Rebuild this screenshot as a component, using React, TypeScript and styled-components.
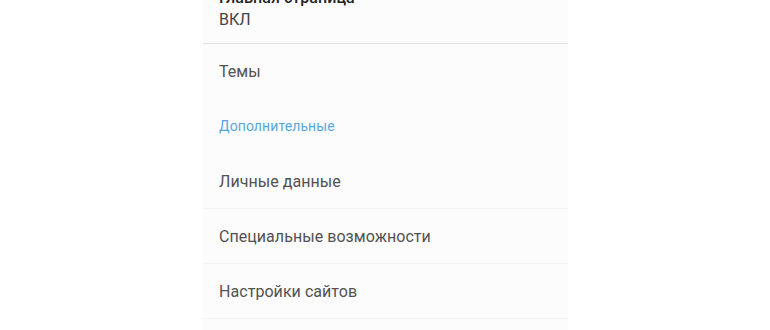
import React from 'react';
import styled, { createGlobalStyle } from 'styled-components';

const GlobalStyle = createGlobalStyle`
    html, body {
        margin: 0;
        padding: 0;
        background: #ffffff;
        font-family: Roboto, 'Noto Sans', sans-serif;
        overflow: hidden;
    }
`;

const Page = styled('div')`
    width: 770px;
    height: 330px;
    overflow: hidden;
    display: flex;
    justify-content: center;
`;

const List = styled('div')`
    width: 365px;
    margin-top: -27px;
    margin-left: 1px;
    background: #fcfcfc;
    display: flex;
    flex-direction: column;
`;

const Item = styled('div')<{ tall?: boolean; divider?: 'strong' | 'faint' | 'none' }>`
    height: ${({ tall }) => (tall ? '71px' : '55px')};
    padding: 0 16px;
    display: flex;
    flex-direction: column;
    justify-content: center;
    box-sizing: border-box;
    border-bottom: 1px solid
        ${({ divider }) => (divider === 'strong' ? '#e3e3e3' : divider === 'faint' ? '#f3f3f3' : 'transparent')};
`;

const Title = styled('span')<{ bold?: boolean }>`
    font-size: 16px;
    color: ${({ bold }) => (bold ? '#222222' : '#525252')};
    font-weight: ${({ bold }) => (bold ? 500 : 400)};
    line-height: 21px;
    letter-spacing: 0.05px;
    padding-top: 1px;
`;

const Subtitle = styled('span')`
    font-size: 16px;
    color: #444444;
    line-height: 21px;
    letter-spacing: 0.05px;
    padding-top: 1px;
`;

const Section = styled('span')`
    font-size: 14px;
    color: #5aa6dc;
    font-weight: 400;
    letter-spacing: 0.1px;
`;

export default function App() {
    return (
        <Page>
            <GlobalStyle />
            <List>
                <Item tall divider="strong">
                    <Title bold>Главная страница</Title>
                    <Subtitle>ВКЛ</Subtitle>
                </Item>
                <Item divider="none">
                    <Title>Темы</Title>
                </Item>
                <Item divider="none">
                    <Section>Дополнительные</Section>
                </Item>
                <Item divider="faint">
                    <Title>Личные данные</Title>
                </Item>
                <Item divider="faint">
                    <Title>Специальные возможности</Title>
                </Item>
                <Item divider="faint">
                    <Title>Настройки сайтов</Title>
                </Item>
            </List>
        </Page>
    );
}
